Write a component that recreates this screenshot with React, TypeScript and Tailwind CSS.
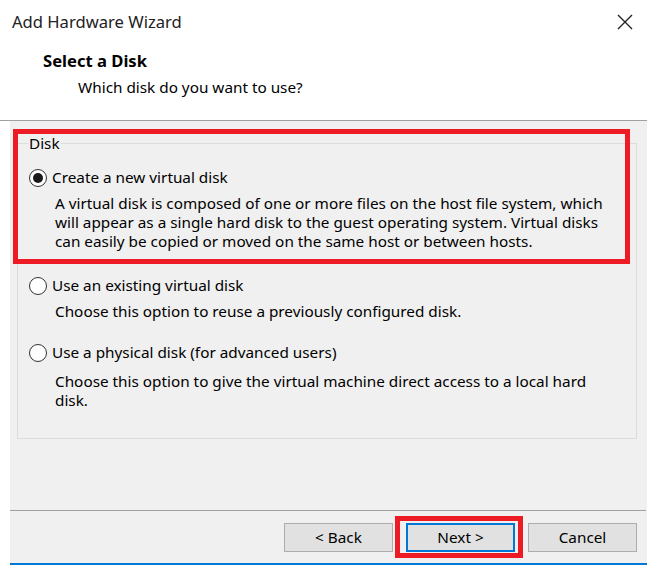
import React from "react";

function Radio({ checked }: { checked?: boolean }) {
  return (
    <span className="flex h-[18px] w-[18px] shrink-0 items-center justify-center rounded-full border border-[#333333] bg-white">
      {checked ? <span className="h-[10px] w-[10px] rounded-full bg-[#1a1a1a]" /> : null}
    </span>
  );
}

function Btn({ label, focused }: { label: string; focused?: boolean }) {
  return (
    <div
      className={
        "flex h-[29px] w-[109px] items-center justify-center bg-[#e1e1e1] text-[15.3px] text-[#000] " +
        (focused ? "border-2 border-[#0078d7]" : "border border-[#adadad]")
      }
    >
      {label}
    </div>
  );
}

export default function App() {
  return (
    <div
      className="relative h-[567px] w-[647px] overflow-hidden bg-white text-[#000]"
      style={{ fontFamily: '"Noto Sans", "Open Sans", sans-serif' }}
    >
      {/* header */}
      <div className="relative h-[121px] border-b border-[#a0a0a0] bg-white">
        <div className="flex items-start justify-between pl-[12px] pr-[14px] pt-[11px]">
          <div className="text-[16.6px] leading-[22px] text-[#222]">Add Hardware Wizard</div>
          <svg width="16" height="16" viewBox="0 0 16 16" className="mt-[3px]">
            <path d="M1 1 L15 15 M15 1 L1 15" stroke="#222" strokeWidth="1.4" />
          </svg>
        </div>
        <div className="pl-[43px] pt-[18px] text-[16.6px] font-bold leading-[20px]">Select a Disk</div>
        <div className="pl-[78px] pt-[6px] text-[15.3px] leading-[20px]">Which disk do you want to use?</div>
      </div>

      {/* body */}
      <div className="ml-[10px] flex h-[442px] flex-col bg-[#f0f0f0]">
        <div className="relative ml-[7px] mt-[22px] h-[296px] w-[620px] border border-[#dcdcdc]">
          <span className="absolute left-[10px] top-[-11px] bg-[#f0f0f0] px-[1px] text-[15.3px] leading-[20px]">
            Disk
          </span>
          <div className="flex flex-col pl-[11px] pt-[24px] text-[15.3px] leading-[19px]">
            <div className="flex items-center gap-[5px]">
              <Radio checked />
              <span>Create a new virtual disk</span>
            </div>
            <div className="mt-[7px] pl-[26px]">
              A virtual disk is composed of one or more files on the host file system, which
              <br />
              will appear as a single hard disk to the guest operating system. Virtual disks
              <br />
              can easily be copied or moved on the same host or between hosts.
            </div>
            <div className="mt-[25px] flex items-center gap-[5px]">
              <Radio />
              <span>Use an existing virtual disk</span>
            </div>
            <div className="mt-[7px] pl-[26px]">Choose this option to reuse a previously configured disk.</div>
            <div className="mt-[22px] flex items-center gap-[5px]">
              <Radio />
              <span>Use a physical disk (for advanced users)</span>
            </div>
            <div className="mt-[10px] pl-[26px]">
              Choose this option to give the virtual machine direct access to a local hard
              <br />
              disk.
            </div>
          </div>
        </div>

        <div className="mr-[1px] mt-[71px] h-px bg-[#a0a0a0]" />

        <div className="mt-[12px] flex gap-[13px] pl-[274px]">
          <Btn label="< Back" />
          <Btn label="Next >" focused />
          <Btn label="Cancel" />
        </div>
      </div>
      <div className="ml-[10px] h-[2px] bg-[#0078d7]" />

      {/* annotations */}
      <div className="pointer-events-none absolute left-[13px] top-[129px] h-[135px] w-[617px] border-[5px] border-[#ed1c24]" />
      <div className="pointer-events-none absolute left-[395px] top-[516px] h-[42px] w-[128px] border-[5px] border-[#ed1c24]" />
    </div>
  );
}
